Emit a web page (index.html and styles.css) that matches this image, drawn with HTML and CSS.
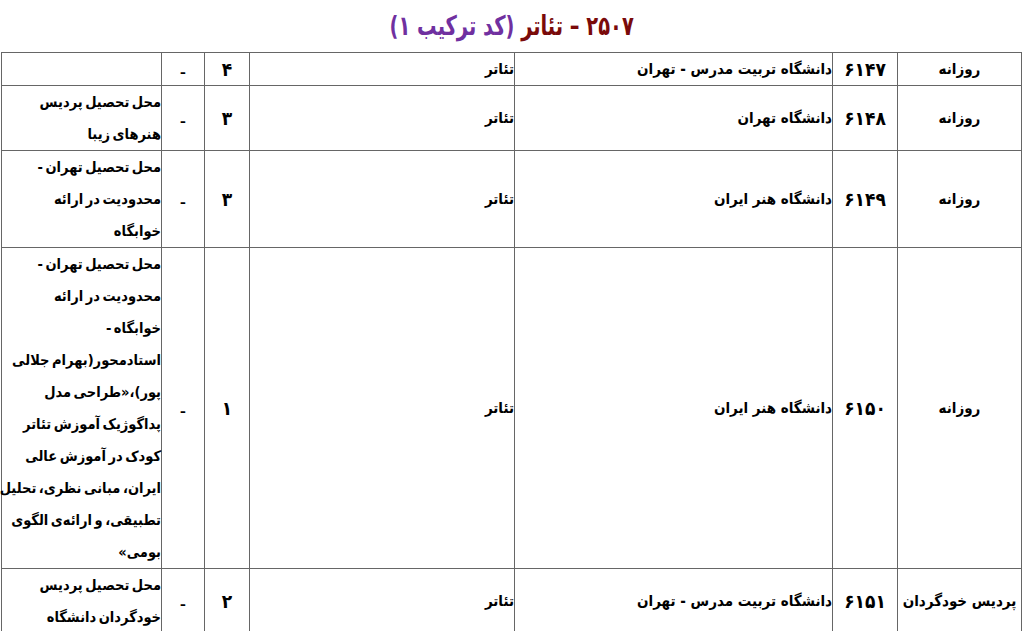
FILE: index.html
```html
<!DOCTYPE html>
<html lang="fa" dir="rtl">
<head>
<meta charset="utf-8">
<title>۲۵۰۷ – تئاتر</title>
<link rel="stylesheet" href="styles.css">
</head>
<body>
<h1 class="title"><span class="title-inner"><span class="title-main">۲۵۰۷ – تئاتر</span> <span class="title-code">(کد ترکیب ۱)</span></span></h1>
<table class="grid">
<colgroup>
<col class="c-type"><col class="c-code"><col class="c-uni"><col class="c-field"><col class="c-num"><col class="c-dash"><col class="c-note">
</colgroup>
<tbody>
<tr>
<td class="center">روزانه</td><td class="center digits">۶۱۴۷</td><td>دانشگاه تربیت مدرس - تهران</td><td>تئاتر</td><td class="center digits">۴</td><td class="center dash">ـ</td><td></td>
</tr>
<tr>
<td class="center">روزانه</td><td class="center digits">۶۱۴۸</td><td>دانشگاه تهران</td><td>تئاتر</td><td class="center digits">۳</td><td class="center dash">ـ</td><td class="note">محل تحصيل پرديس<br>هنرهای زيبا</td>
</tr>
<tr>
<td class="center">روزانه</td><td class="center digits">۶۱۴۹</td><td>دانشگاه هنر ايران</td><td>تئاتر</td><td class="center digits">۳</td><td class="center dash">ـ</td><td class="note">محل تحصيل تهران -<br>محدوديت در ارائه<br>خوابگاه</td>
</tr>
<tr>
<td class="center">روزانه</td><td class="center digits">۶۱۵۰</td><td>دانشگاه هنر ايران</td><td>تئاتر</td><td class="center digits">۱</td><td class="center dash">ـ</td><td class="note">محل تحصيل تهران -<br>محدوديت در ارائه<br>خوابگاه -<br>استادمحور(بهرام جلالی<br>پور)،«طراحی مدل<br>پداگوژيک آموزش تئاتر<br>کودک در آموزش عالی<br>ايران، مبانی نظری، تحليل<br>تطبيقی، و ارائه‌ی الگوی<br>بومی»</td>
</tr>
<tr>
<td class="center">پرديس خودگردان</td><td class="center digits">۶۱۵۱</td><td>دانشگاه تربیت مدرس - تهران</td><td>تئاتر</td><td class="center digits">۲</td><td class="center dash">ـ</td><td class="note">محل تحصيل پرديس<br>خودگردان دانشگاه</td>
</tr>
</tbody>
</table>
</body>
</html>
```
FILE: styles.css
```css
html, body {
  margin: 0;
  padding: 0;
  background: #ffffff;
}
body {
  font-family: "DejaVu Sans Condensed", "DejaVu Sans", sans-serif;
  font-weight: bold;
  color: #000;
}
.title {
  margin: 0;
  height: 52px;
  line-height: 52px;
  text-align: center;
  font-size: 27px;
  font-weight: bold;
}
.title-inner {
  display: inline-block;
  transform: scaleX(0.8);
}
.title-main { color: #7a0a0a; }
.title-code { color: #7030a0; }
.grid {
  border-collapse: collapse;
  width: 1021px;
  margin: 0 1px 0 0;
  table-layout: fixed;
  font-size: 15px;
  line-height: 32px;
}
.grid td {
  border: 1px solid #666;
  padding: 0;
  vertical-align: middle;
  text-align: right;
}
.grid td.center { text-align: center; }
.grid td.digits { font-size: 19px; }
.grid td.dash { font-size: 14px; }
.grid td.note {
  white-space: nowrap;
  font-size: 14.5px;
  word-spacing: -2px;
}
.c-type { width: 124px; }
.c-code { width: 65px; }
.c-uni { width: 318px; }
.c-field { width: 265px; }
.c-num { width: 45px; }
.c-dash { width: 43px; }
.c-note { width: 160px; }
```
